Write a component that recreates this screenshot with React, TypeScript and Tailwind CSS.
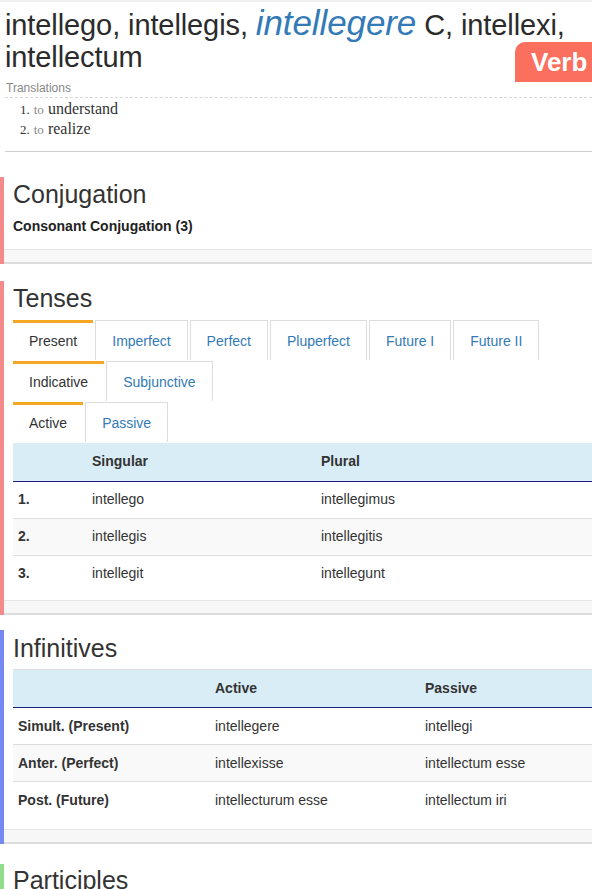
import React from "react";

const sans = "font-['Liberation_Sans',Arial,sans-serif]";
const serif = "font-['Liberation_Serif','Times_New_Roman',serif]";

function Footer() {
  return <div className="h-[15px] border-t border-[#e6e6e6] border-b-2 border-b-[#dcdcdc] bg-[#f7f7f7]" />;
}

function Tab({ label, active }: { label: string; active?: boolean }) {
  return active ? (
    <div className="h-[40px] flex items-center px-4 border-t-[3px] border-[#f5a623] bg-white text-[14px] text-[#333]">
      {label}
    </div>
  ) : (
    <div className="h-[40px] flex items-center px-4 pt-[2px] border border-b-0 border-[#dddddd] bg-white text-[14px] text-[#337ab7]">
      {label}
    </div>
  );
}

const tenses = [
  ["1.", "intellego", "intellegimus"],
  ["2.", "intellegis", "intellegitis"],
  ["3.", "intellegit", "intellegunt"],
];

const infinitives = [
  ["Simult. (Present)", "intellegere", "intellegi"],
  ["Anter. (Perfect)", "intellexisse", "intellectum esse"],
  ["Post. (Future)", "intellecturum esse", "intellectum iri"],
];

export default function App() {
  return (
    <div className={`${sans} w-[592px] h-[889px] overflow-hidden bg-white text-[#333]`}>
      <div className="h-[2px] bg-[#efefef]" />

      {/* header */}
      <div className="relative pl-[5px] pt-[3px]">
        <h1 className="text-[29px] leading-[32px] text-[#2b2b2b] tracking-[-0.1px]">
          intellego, intellegis, <em className="text-[35px] leading-none text-[#337ab7]">intellegere</em> C, intellexi,
          intellectum
        </h1>
        <div className="absolute left-[515px] top-[40px] w-[100px] h-[40px] rounded-tl-[10px] bg-[#fb6f5f] pl-[16px] flex items-center">
          <span className="text-[26px] font-bold text-white leading-none">Verb</span>
        </div>
        <div className="mt-[7px] pl-[1px] pb-[1px] border-b border-dashed border-[#d6d6d6] text-[12px] leading-[16px] text-[#888]">
          Translations
        </div>
        <ol className={`${serif} mt-[1px] pl-[15px] text-[16px] leading-[20px] text-[#333]`}>
          <li className="h-[20px]">
            <span className="text-[13px] leading-none">1.</span>{" "}
            <span className="text-[13px] leading-none text-[#888]">to</span> understand
          </li>
          <li className="h-[20px]">
            <span className="text-[13px] leading-none">2.</span>{" "}
            <span className="text-[13px] leading-none text-[#888]">to</span> realize
          </li>
        </ol>
        <div className="mt-[12px] border-b border-[#cfcfcf]" />
      </div>

      {/* Conjugation */}
      <section className="mt-[25px] border-l-4 border-[#f58a8a]">
        <div className="pl-[9px] pt-[3px] pb-[13px]">
          <h2 className="text-[25px] leading-[28px] text-[#333]">Conjugation</h2>
          <p className="mt-[8px] text-[14px] leading-[20px] font-bold text-[#222]">Consonant Conjugation (3)</p>
        </div>
        <Footer />
      </section>

      {/* Tenses */}
      <section className="mt-[17px] border-l-4 border-[#f58a8a]">
        <div className="pl-[9px] pt-[3px] pb-[8px]">
          <h2 className="text-[25px] leading-[28px] text-[#333]">Tenses</h2>
          <div className="mt-[8px] flex flex-col gap-[1px]">
            <div className="flex gap-[2px]">
              <Tab label="Present" active />
              <Tab label="Imperfect" />
              <Tab label="Perfect" />
              <Tab label="Pluperfect" />
              <Tab label="Future I" />
              <Tab label="Future II" />
            </div>
            <div className="flex gap-[2px]">
              <Tab label="Indicative" active />
              <Tab label="Subjunctive" />
            </div>
            <div className="flex gap-[2px]">
              <Tab label="Active" active />
              <Tab label="Passive" />
            </div>
          </div>
          <table className="mt-[1px] w-full border-collapse text-[14px] text-[#333] table-fixed">
            <thead>
              <tr className="h-[38px] bg-[#d9edf7] border-b-[1.5px] border-[#1b1f7a]">
                <th className="w-[74px]" />
                <th className="w-[229px] text-left font-bold pl-[5px]">Singular</th>
                <th className="text-left font-bold pl-[5px]">Plural</th>
              </tr>
            </thead>
            <tbody>
              {tenses.map((r, i) => (
                <tr key={i} className={`h-[37px] border-t border-[#dddddd] ${i === 1 ? "bg-[#f9f9f9]" : "bg-white"}`}>
                  <td className="pl-[5px] font-bold">{r[0]}</td>
                  <td className="pl-[5px]">{r[1]}</td>
                  <td className="pl-[5px]">{r[2]}</td>
                </tr>
              ))}
            </tbody>
          </table>
        </div>
        <Footer />
      </section>

      {/* Infinitives */}
      <section className="mt-[15px] border-l-4 border-[#7489f2]">
        <div className="pl-[9px] pt-[4px] pb-[10px]">
          <h2 className="text-[25px] leading-[28px] text-[#333]">Infinitives</h2>
          <table className="mt-[7px] w-full border-collapse text-[14px] text-[#333] table-fixed">
            <thead>
              <tr className="h-[38px] bg-[#d9edf7] border-t border-[#dddddd] border-b-[1.5px] border-b-[#1b1f7a]">
                <th className="w-[197px]" />
                <th className="w-[210px] text-left font-bold pl-[5px]">Active</th>
                <th className="text-left font-bold pl-[5px]">Passive</th>
              </tr>
            </thead>
            <tbody>
              {infinitives.map((r, i) => (
                <tr key={i} className={`h-[37px] border-t border-[#dddddd] ${i === 1 ? "bg-[#f9f9f9]" : "bg-white"}`}>
                  <td className="pl-[5px] font-bold">{r[0]}</td>
                  <td className="pl-[5px]">{r[1]}</td>
                  <td className="pl-[5px]">{r[2]}</td>
                </tr>
              ))}
            </tbody>
          </table>
        </div>
        <Footer />
      </section>

      {/* Participles */}
      <section className="mt-[20px] border-l-4 border-[#93dd8f]">
        <div className="pl-[9px] pt-[2px]">
          <h2 className="text-[25px] leading-[28px] text-[#333]">Participles</h2>
        </div>
      </section>
    </div>
  );
}
